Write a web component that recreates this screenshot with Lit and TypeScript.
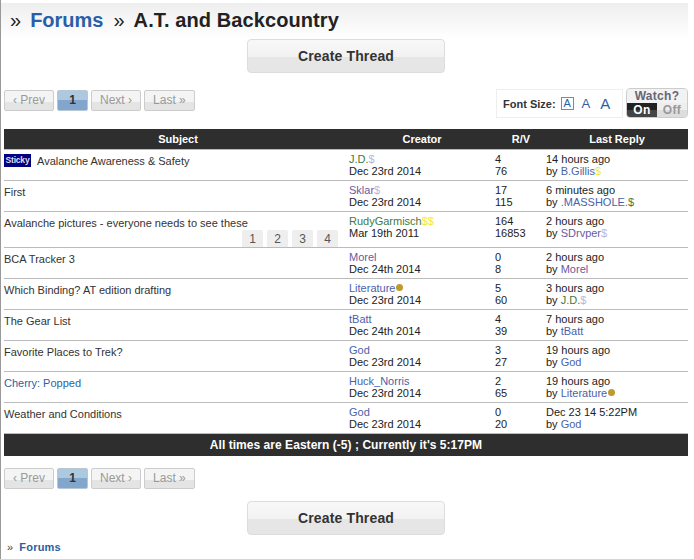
import { LitElement, html, css } from "lit";
import { customElement } from "lit/decorators.js";

type U = { n: string; c: string; d?: string; dc?: string; coin?: boolean };
const BLUE = "#4a62a8", GREEN = "#3f7a3e", PURP = "#6a5aa0", SB = "#b6b6e0", YEL = "#f2e83a";
const jd: U = { n: "J.D.", c: GREEN, d: "$", dc: SB };
const god: U = { n: "God", c: BLUE };
const lit: U = { n: "Literature", c: BLUE, coin: true };
const rows: any[] = [
  { s: "Avalanche Awareness & Safety", sticky: true, u: jd, date: "Dec 23rd 2014", r: 4, v: 76, t: "14 hours ago", l: { n: "B.Gillis", c: BLUE, d: "$", dc: YEL } },
  { s: "First", u: { n: "Sklar", c: PURP, d: "$", dc: SB }, date: "Dec 23rd 2014", r: 17, v: 115, t: "6 minutes ago", l: { n: ".MASSHOLE.", c: BLUE, d: "$", dc: GREEN } },
  { s: "Avalanche pictures - everyone needs to see these", pages: [1, 2, 3, 4], u: { n: "RudyGarmisch", c: GREEN, d: "$$", dc: YEL }, date: "Mar 19th 2011", r: 164, v: 16853, t: "2 hours ago", l: { n: "SDrvper", c: PURP, d: "$", dc: SB } },
  { s: "BCA Tracker 3", u: { n: "Morel", c: PURP }, date: "Dec 24th 2014", r: 0, v: 8, t: "2 hours ago", l: { n: "Morel", c: PURP } },
  { s: "Which Binding? AT edition drafting", u: lit, date: "Dec 23rd 2014", r: 5, v: 60, t: "3 hours ago", l: jd },
  { s: "The Gear List", u: { n: "tBatt", c: BLUE }, date: "Dec 24th 2014", r: 4, v: 39, t: "7 hours ago", l: { n: "tBatt", c: BLUE } },
  { s: "Favorite Places to Trek?", u: god, date: "Dec 23rd 2014", r: 3, v: 27, t: "19 hours ago", l: god },
  { s: "Cherry: Popped", link: true, u: { n: "Huck_Norris", c: BLUE }, date: "Dec 23rd 2014", r: 2, v: 65, t: "19 hours ago", l: lit },
  { s: "Weather and Conditions", u: god, date: "Dec 23rd 2014", r: 0, v: 20, t: "Dec 23 14 5:22PM", l: god },
];

@customElement("app-root")
export class AppRoot extends LitElement {
  static styles = css`
    :host { display: block; width: 694px; height: 559px; overflow: hidden; background: #fff; font-family: "Liberation Sans", Arial, sans-serif; font-size: 12px; color: #222; border-left: 1px solid #999; box-sizing: border-box; }
    .page { width: 687px; padding: 3px 0 0 3px; box-sizing: border-box; }
    .title { height: 36px; margin-left: -3px; padding: 0 0 3px 9px; display: flex; align-items: center; font-size: 20px; font-weight: bold; background: linear-gradient(#eee, #fff); color: #222; line-height: 24px; box-sizing: border-box; }
    .title a { color: #2b5fa5; margin: 0 10px 0 9px; }
    .title .q { font-weight: normal; }
    .title .t { margin-left: 9px; letter-spacing: 0.1px; }
    .cbar { display: flex; justify-content: center; }
    .create { width: 198px; height: 34px; box-sizing: border-box; border: 1px solid #ddd; border-radius: 4px; background: linear-gradient(#f8f8f8 0, #f2f2f2 53%, #e6e6e6 53%, #e6e6e6 100%); font-size: 14px; font-weight: bold; letter-spacing: 0.15px; display: flex; align-items: center; justify-content: center; color: #333; }
    .tools { display: flex; align-items: flex-start; justify-content: space-between; height: 41px; margin-top: 15px; }
    .pager { display: flex; gap: 3px; margin-top: 2px; }
    .pb { height: 21px; box-sizing: border-box; border: 1px solid #ccc; border-radius: 2px; padding: 0 8px 2px; display: flex; align-items: center; justify-content: center; color: #999; background: linear-gradient(#f4f4f4 0, #f4f4f4 60%, #e4e4e4 60%, #e4e4e4 100%); white-space: nowrap; }
    .pb.on { width: 31px; padding: 0 0 2px; color: #333; font-weight: bold; border-color: #b8c6d6; background: linear-gradient(#adc9e0 0, #adc9e0 50%, #82a6cc 50%, #82a6cc 100%); }
    .right { display: flex; gap: 3px; align-items: flex-start; }
    .fs { margin-top: 1px; width: 127px; height: 29px; box-sizing: border-box; border: 1px solid #eee; display: flex; align-items: center; padding-left: 6px; font-size: 11px; font-weight: bold; color: #333; }
    .fs span { color: #2b5fa5; font-weight: normal; display: flex; align-items: center; justify-content: center; }
    .a1 { width: 13px; height: 13px; box-sizing: border-box; border: 1px solid #888; font-size: 11px; margin-left: 5px; line-height: 1; }
    .a2 { font-size: 13px; margin-left: 8px; }
    .a3 { font-size: 15px; margin-left: 10px; }
    .watch { width: 62px; height: 30px; box-sizing: border-box; border: 1px solid #ccc; border-radius: 4px; overflow: hidden; background: #eee; font-weight: bold; font-size: 12px; text-align: center; color: #667; display: flex; flex-direction: column; }
    .watch .w { height: 14px; line-height: 14px; background: #f2f2f2; letter-spacing: .3px; }
    .watch .o { display: flex; flex: 1; line-height: 14px; }
    .watch .on { width: 30px; color: #fff; background: linear-gradient(#222 0, #222 50%, #444 50%); letter-spacing: .4px; }
    .watch .off { flex: 1; color: #999; background: linear-gradient(#eee 0, #eee 50%, #ddd 50%); letter-spacing: .4px; }
    .hd, .row { display: grid; grid-template-columns: 340px 146px 56px 1fr; width: 684px; }
    .hd { height: 20px; background: #2e2e2e; color: #fff; font-weight: bold; font-size: 11px; align-items: center; text-align: center; }
    .hd div:nth-child(1) { padding-left: 8px; }
    .hd div:nth-child(2) { padding-left: 10px; }
    .hd div:nth-child(3) { padding-left: 6px; }
    .row { height: 31px; border-top: 1px solid #bbb; box-sizing: border-box; line-height: 12px; padding-top: 3px; color: #222; font-size: 11px; }
    .row.tall { height: 36px; }
    .s { position: relative; display: flex; align-items: flex-start; gap: 6px; color: #333; padding-top: 2px; line-height: 12px; height: 12px; }
    .s .link { color: #2b5fa5; }
    .sticky { width: 27px; height: 13px; background: #000080; color: #dde; font-size: 8.5px; letter-spacing: -.2px; font-weight: bold; text-align: center; line-height: 12px; flex: none; margin-top: -1px; }
    .pages { position: absolute; left: 238px; top: 15px; display: flex; gap: 4px; }
    .pages span { width: 21px; height: 17px; background: #eee; border-radius: 2px 2px 0 0; color: #555; font-size: 12px; display: flex; align-items: center; justify-content: center; }
    .c, .n { padding-left: 5px; }
    .c, .n, .l { display: flex; flex-direction: column; }
    .c > div, .n > div, .l > div { height: 12px; line-height: 12px; white-space: nowrap; }
    .coin { display: inline-block; width: 7px; height: 7px; margin-left: 1px; border-radius: 50%; background: #c09a30; vertical-align: 1px; }
    .foot { height: 23px; background: #2e2e2e; background-clip: padding-box; color: #fff; font-weight: bold; display: flex; align-items: center; justify-content: center; border-top: 1px solid #bbb; box-sizing: border-box; width: 684px; letter-spacing: .04px; }
    .pager.b { margin-top: 12px; }
    .cbar.b { margin-top: 12px; }
    .crumb { margin: 6px 0 0 3px; display: flex; gap: 6px; font-size: 11px; font-weight: bold; color: #2b5fa5; letter-spacing: .2px; }
    .crumb i { font-style: normal; color: #444; font-weight: normal; }
  `;

  user(u: U) {
    return html`<span style="color:${u.c}">${u.n}</span>${u.d ? html`<span style="color:${u.dc}">${u.d}</span>` : ""}${u.coin ? html`<span class="coin"></span>` : ""}`;
  }

  pager() {
    return html`<div class="pb">‹ Prev</div><div class="pb on">1</div><div class="pb">Next ›</div><div class="pb">Last »</div>`;
  }

  render() {
    return html`<div class="page">
      <div class="title"><span class="q">»</span><a>Forums</a><span class="q">»</span><span class="t">A.T. and Backcountry</span></div>
      <div class="cbar"><div class="create">Create Thread</div></div>
      <div class="tools">
        <div class="pager">${this.pager()}</div>
        <div class="right">
          <div class="fs">Font Size:<span class="a1">A</span><span class="a2">A</span><span class="a3">A</span></div>
          <div class="watch"><div class="w">Watch?</div><div class="o"><div class="on">On</div><div class="off">Off</div></div></div>
        </div>
      </div>
      <div class="hd"><div>Subject</div><div>Creator</div><div>R/V</div><div>Last Reply</div></div>
      ${rows.map((r) => html`<div class="row ${r.pages ? "tall" : ""}">
        <div class="s">${r.sticky ? html`<span class="sticky">Sticky</span>` : ""}<span class="${r.link ? "link" : ""}">${r.s}</span>
          ${r.pages ? html`<div class="pages">${r.pages.map((p: number) => html`<span>${p}</span>`)}</div>` : ""}</div>
        <div class="c"><div>${this.user(r.u)}</div><div>${r.date}</div></div>
        <div class="n"><div>${r.r}</div><div>${r.v}</div></div>
        <div class="l"><div>${r.t}</div><div>by ${this.user(r.l)}</div></div>
      </div>`)}
      <div class="foot">All times are Eastern (-5) ; Currently it's 5:17PM</div>
      <div class="pager b">${this.pager()}</div>
      <div class="cbar b"><div class="create">Create Thread</div></div>
      <div class="crumb"><i>»</i><span>Forums</span></div>
    </div>`;
  }
}
